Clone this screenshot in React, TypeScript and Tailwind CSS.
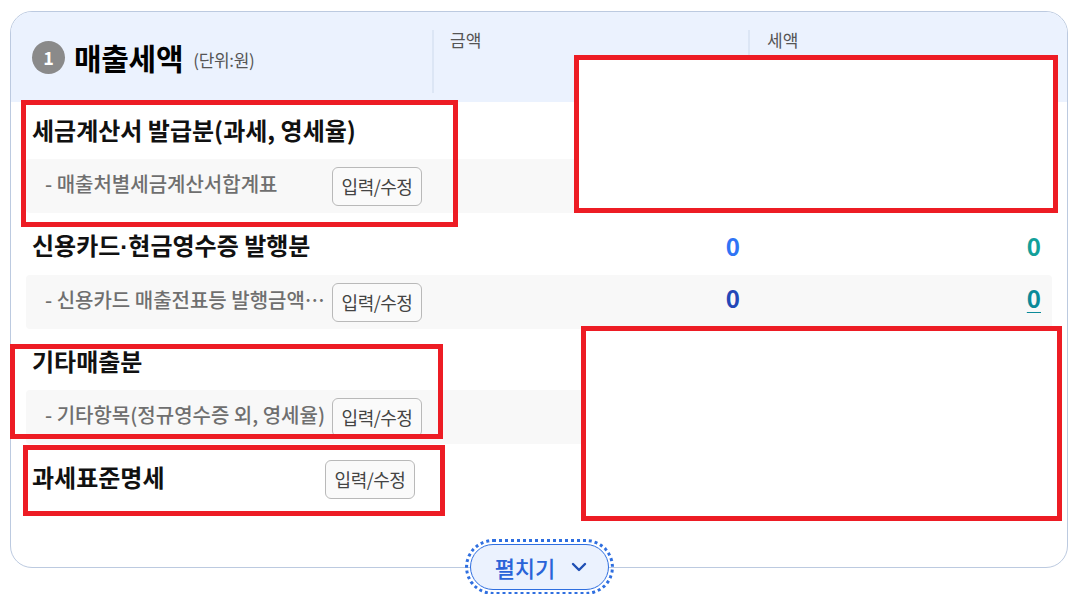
import type { ReactNode } from 'react';

const font = { fontFamily: '"Noto Sans CJK KR", "Noto Sans", sans-serif' };

const EditButton = () => (
  <button className="w-[90px] h-[39px] shrink-0 rounded-[6px] border border-[#b9b9b9] bg-[#fafafa] text-[18px] tracking-[-0.5px] text-[#444444] flex items-center justify-center">
    입력/수정
  </button>
);

const TitleRow = ({ title, amounts }: { title: ReactNode; amounts?: boolean }) => (
  <div className="h-[57px] pl-[21px] pr-[26px] flex items-center justify-between">
    <span className="pb-[2px] text-[24px] leading-none font-semibold text-[#111111]">{title}</span>
    {amounts && (
      <div className="flex pb-[1px] font-bold text-[24px] leading-none">
        <span className="text-[#2f74f5]">0</span>
        <span className="w-[301px] text-right text-[#12a09a]">0</span>
      </div>
    )}
  </div>
);

const SubRow = ({ label, amounts }: { label: string; amounts?: boolean }) => (
  <div className="mx-[15px] h-[54px] pl-[19px] pr-[11px] rounded-[4px] bg-[#f8f8f8] flex items-center">
    <span className="w-[287px] shrink-0 pb-[5px] whitespace-nowrap text-[20px] font-medium text-[#6f6f6f]">- {label}</span>
    <EditButton />
    {amounts && (
      <div className="flex-1 flex pb-[9px] font-bold text-[24px] leading-none">
        <span className="w-[318px] text-right text-[#2348b8]">0</span>
        <span className="flex-1 text-right">
          <span className="text-[#0b8a99] underline underline-offset-[4px] decoration-[1px]">0</span>
        </span>
      </div>
    )}
  </div>
);

const Mark = ({ className }: { className: string }) => (
  <div className={`absolute border-[5px] border-[#ed1c24] ${className}`} />
);

export default function App() {
  return (
    <div style={font} className="relative w-[1087px] h-[594px] overflow-hidden bg-white">
      <div className="pt-[11px] px-[10px]">
        <section className="relative w-[1058px] h-[557px] rounded-[22px] border border-[#bccae0]">
          <header className="h-[90px] rounded-t-[21px] bg-[#ebf2fe] flex">
            <div className="w-[421px] flex items-center pl-[21px]">
              <span className="w-[33px] h-[33px] rounded-full bg-[#8a8a8a] text-white text-[18px] font-bold flex items-center justify-center">1</span>
              <h2 className="ml-[9px] mb-[1px] text-[30px] leading-none font-bold tracking-[-0.3px] text-black">매출세액</h2>
              <span className="ml-[10px] mt-[5px] text-[17px] tracking-[-0.3px] text-[#555555]">(단위:원)</span>
            </div>
            <div className="w-[316px] mt-[18px] mb-[9px] pl-[16px] border-l-2 border-[#dce6f5] text-[17px] leading-[20px] text-[#555555]">금액</div>
            <div className="flex-1 mt-[18px] mb-[9px] pl-[17px] border-l-2 border-[#dce6f5] text-[17px] leading-[20px] text-[#555555]">세액</div>
          </header>

          <TitleRow title="세금계산서 발급분(과세, 영세율)" />
          <SubRow label="매출처별세금계산서합계표" />
          <div className="h-[5px]" />
          <TitleRow
            title={
              <>
                신용카드<span className="font-['Liberation_Sans']">·</span>현금영수증 발행분
              </>
            }
            amounts
          />
          <SubRow label="신용카드 매출전표등 발행금액…" amounts />
          <div className="h-[4px]" />
          <TitleRow title="기타매출분" />
          <SubRow label="기타항목(정규영수증 외, 영세율)" />
          <div className="mt-[15px] pl-[21px] flex items-center">
            <span className="w-[293px] pb-[4px] text-[24px] font-semibold text-[#111111]">과세표준명세</span>
            <EditButton />
          </div>

          <button className="absolute left-[459px] top-[532px] w-[139px] h-[46px] pl-[3px] rounded-full bg-[#ebf2fe] border border-[#2f6fe0] outline-[3px] outline-dotted outline-offset-[2px] outline-[#2f6fe0] text-[#2a64d8] text-[22px] font-medium flex items-center justify-center gap-[16px]">
            펼치기
            <svg width="16" height="10" viewBox="0 0 16 10" fill="none" stroke="#1f4fb4" strokeWidth="2.4" strokeLinecap="round" strokeLinejoin="round">
              <path d="M2 2l6 6 6-6" />
            </svg>
          </button>
        </section>
      </div>

      {/* annotations over the capture */}
      <Mark className="left-[21px] top-[100px] w-[437px] h-[127px]" />
      <Mark className="left-[574px] top-[55px] w-[484px] h-[158px] bg-white" />
      <Mark className="left-[10px] top-[344px] w-[433px] h-[95px]" />
      <Mark className="left-[23px] top-[445px] w-[422px] h-[71px]" />
      <Mark className="left-[581px] top-[326px] w-[481px] h-[195px] bg-white" />
    </div>
  );
}
